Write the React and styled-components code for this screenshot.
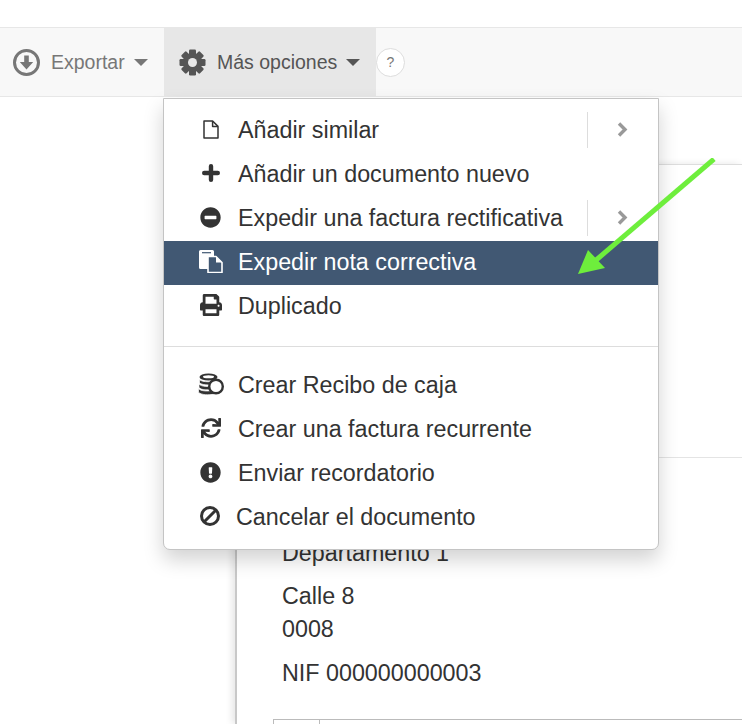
import React from "react";
import styled, { createGlobalStyle } from "styled-components";
import { FaMinusCircle, FaPrint, FaSync, FaExclamationCircle } from "react-icons/fa";

const GlobalStyle = createGlobalStyle`
  html, body { margin: 0; padding: 0; background: #fff; }
  body {
    width: 742px;
    height: 724px;
    overflow: hidden;
    font-family: "Liberation Sans", Arial, sans-serif;
    color: #333;
  }
`;

function FileOutline() {
  return (
    <svg viewBox="0 0 16 19" fill="none" stroke="#333" strokeWidth="1.5" strokeLinejoin="round">
      <path d="M1 1h8.6L15 6.4V18H1z" />
      <path d="M9.6 1v5.4H15" />
    </svg>
  );
}

function PlusIcon() {
  return (
    <svg viewBox="0 0 18 18" fill="none" stroke="#333" strokeWidth="4.4" strokeLinecap="round">
      <path d="M9 2.200V15.800M2.200 9H15.800" />
    </svg>
  );
}

function CopyDocs() {
  return (
    <svg viewBox="0 0 24 24">
      <path d="M1.5 1h12a1.5 1.5 0 0 1 1.5 1.5V20H1.5A1.5 1.5 0 0 1 0 18.500V2.500A1.500 1.500 0 0 1 1.500 1z" fill="#fff" />
      <path d="M3 3.700h9" stroke="#415873" strokeWidth="1.200" />
      <path d="M9 7.500h8l6 6V23.500H9z" fill="#415873" stroke="#fff" strokeWidth="1.600" strokeLinejoin="round" />
      <path d="M17 7.500v6h6z" fill="#fff" />
    </svg>
  );
}

function Coins() {
  return (
    <svg viewBox="0 0 26 22">
      <ellipse cx="10.500" cy="4" rx="9" ry="3.600" fill="#333" />
      <ellipse cx="10.500" cy="3.800" rx="5.500" ry="1.500" fill="#fff" />
      <path d="M1.500 6.500c2 3 15 3 18 0v3.500c-3 2.600-15 2.600-18 0z" fill="#333" stroke="#fff" strokeWidth="0.700" />
      <path d="M1 11c2 2.800 10 3 13 1.600v3.400c-3 1.400-11 1.200-13-1.400z" fill="#333" stroke="#fff" strokeWidth="0.700" />
      <path d="M0.500 15.500c2 2.800 10 3 13.500 1.800l2 3.700c-5 1.400-13 1-15.500-1.800z" fill="#333" stroke="#fff" strokeWidth="0.700" />
      <circle cx="18" cy="13.500" r="6.800" fill="#fff" stroke="#333" strokeWidth="2.400" />
    </svg>
  );
}

function BanIcon() {
  return (
    <svg viewBox="0 0 20 20" fill="none" stroke="#333" strokeWidth="3">
      <circle cx="10" cy="10" r="8.500" />
      <path d="M4 16L16 4" />
    </svg>
  );
}

function Chevron() {
  return (
    <svg width="11" height="15" viewBox="0 0 11 15" fill="none" stroke="#999" strokeWidth="3.400">
      <path d="M2 1.500L8 7.500L2 13.500" />
    </svg>
  );
}

function DownloadRing() {
  return (
    <svg viewBox="0 0 27 27" fill="currentColor">
      <circle cx="13.500" cy="13.500" r="12" fill="none" stroke="currentColor" strokeWidth="3" />
      <path d="M11.200 6.500h4.600v6.500h4.400l-6.700 7.400-6.700-7.400h4.400z" />
    </svg>
  );
}

function GearIcon() {
  const teeth = [0, 45, 90, 135];
  return (
    <svg viewBox="0 0 27 27" fill="currentColor">
      {teeth.map((a) => (
        <rect key={a} x="10" y="0.500" width="7" height="26" rx="1.200" transform={`rotate(${a} 13.500 13.500)`} />
      ))}
      <circle cx="13.500" cy="13.500" r="9.500" />
      <circle cx="13.500" cy="13.500" r="4.500" fill="#e7e7e7" />
    </svg>
  );
}

function Arrow() {
  return (
    <svg width="140" height="120" viewBox="0 0 140 120">
      <path d="M136 1 L17 103" stroke="#6eee3c" strokeWidth="5" fill="none" />
      <path d="M0 116 L10 92 L27 110 Z" fill="#6eee3c" />
    </svg>
  );
}

const menuTop = [
  { icon: <FileOutline />, w: 16, h: 19, label: "Añadir similar", more: true },
  { icon: <PlusIcon />, w: 18, h: 18, label: "Añadir un documento nuevo" },
  { icon: <FaMinusCircle />, w: 21, h: 21, label: "Expedir una factura rectificativa", more: true },
  { icon: <CopyDocs />, w: 24, h: 24, label: "Expedir nota correctiva", active: true },
  { icon: <FaPrint />, w: 22, h: 22, label: "Duplicado" },
];

const menuBottom = [
  { icon: <Coins />, w: 26, h: 22, label: "Crear Recibo de caja" },
  { icon: <FaSync />, w: 20, h: 20, label: "Crear una factura recurrente" },
  { icon: <FaExclamationCircle />, w: 21, h: 21, label: "Enviar recordatorio" },
  { icon: <BanIcon />, w: 20, h: 20, label: "Cancelar el documento", shift: true },
];

function Row({ item }) {
  return (
    <MenuRow $active={item.active}>
      <IconBox $w={item.w} $h={item.h} $shift={item.shift}>
        {item.icon}
      </IconBox>
      <RowLabel>{item.label}</RowLabel>
      {item.more && (
        <More>
          <Chevron />
        </More>
      )}
    </MenuRow>
  );
}

export default function App() {
  return (
    <Page>
      <GlobalStyle />
      <Toolbar>
        <ToolButton>
          <DownloadRing />
          <span>Exportar</span>
          <Caret />
        </ToolButton>
        <ToolButton $open>
          <GearIcon />
          <span>Más opciones</span>
          <Caret />
        </ToolButton>
        <Help>?</Help>
      </Toolbar>
      <Body>
        <Sheet>
          <SheetHead />
          <SheetText>
            <p>Departamento 1</p>
            <p>
              Calle 8
              <br />
              0008
            </p>
            <p>NIF 000000000003</p>
          </SheetText>
          <TableHead>
            <div />
            <div />
          </TableHead>
        </Sheet>
        <Menu>
          {menuTop.map((item) => (
            <Row key={item.label} item={item} />
          ))}
          <Divider />
          {menuBottom.map((item) => (
            <Row key={item.label} item={item} />
          ))}
        </Menu>
        <ArrowLayer>
          <Arrow />
        </ArrowLayer>
      </Body>
    </Page>
  );
}

const Page = styled.div`
  width: 742px;
  height: 724px;
  overflow: hidden;
  padding-top: 27px;
  box-sizing: border-box;
`;

const Toolbar = styled.div`
  display: flex;
  align-items: center;
  height: 68px;
  background: #f8f8f8;
  border-top: 1px solid #e7e7e7;
  border-bottom: 1px solid #e7e7e7;
`;

const ToolButton = styled.div`
  display: flex;
  align-items: center;
  box-sizing: border-box;
  height: 100%;
  width: ${(p) => (p.$open ? "212px" : "164px")};
  padding-left: ${(p) => (p.$open ? "15px" : "13px")};
  font-size: 19.5px;
  color: ${(p) => (p.$open ? "#555" : "#777")};
  background: ${(p) => (p.$open ? "#e7e7e7" : "transparent")};

  svg {
    width: 27px;
    height: 27px;
    flex: none;
    margin-right: 11px;
  }

  span {
    margin-right: 9px;
    padding-top: 1px;
  }
`;

const Caret = styled.i`
  width: 0;
  height: 0;
  border-left: 7px solid transparent;
  border-right: 7px solid transparent;
  border-top: 7px solid currentColor;
`;

const Help = styled.div`
  width: 29px;
  height: 29px;
  box-sizing: border-box;
  border: 1px solid #ddd;
  border-radius: 50%;
  background: #fff;
  color: #777;
  font-size: 14px;
  display: flex;
  align-items: center;
  justify-content: center;
`;

const Body = styled.div`
  position: relative;
  padding: 67px 0 0 235px;
`;

const Sheet = styled.div`
  width: 507px;
  height: 560px;
  border-left: 2px solid #c8c8c8;
  border-top: 1px solid #ddd;
  box-shadow: -3px 0 7px rgba(0, 0, 0, 0.1);
  box-sizing: border-box;
`;

const SheetHead = styled.div`
  height: 292px;
  border-bottom: 1px solid #e4e4e4;
`;

const SheetText = styled.div`
  padding: 79px 0 0 45px;
  font-size: 23.3px;
  line-height: 33px;

  p {
    margin: 0 0 11px;
  }

  p:first-child {
    margin-bottom: 10px;
  }
`;

const TableHead = styled.div`
  display: grid;
  grid-template-columns: 45px 1fr;
  margin: 29px 0 0 36px;
  border-top: 1px solid #bbb;
  border-left: 1px solid #bbb;
  height: 20px;

  div + div {
    border-left: 1px solid #bbb;
  }
`;

const Menu = styled.div`
  position: absolute;
  left: 163px;
  top: 1px;
  width: 496px;
  height: 452px;
  box-sizing: border-box;
  padding: 10px 0;
  background: #fff;
  border: 1px solid #c4c4c4;
  border-radius: 0 0 7px 7px;
  box-shadow: 0 10px 20px rgba(0, 0, 0, 0.175);
`;

const MenuRow = styled.div`
  display: flex;
  align-items: center;
  box-sizing: border-box;
  height: 44px;
  padding: 0 0 2px 35px;
  font-size: 23.3px;
  color: ${(p) => (p.$active ? "#fff" : "#333")};
  background: ${(p) => (p.$active ? "#415873" : "transparent")};
`;

const IconBox = styled.span`
  width: 23px;
  margin-left: ${(p) => (p.$shift ? "-1px" : "0")};
  margin-right: ${(p) => (p.$shift ? "15px" : "16px")};
  margin-bottom: 2px;
  display: flex;
  align-items: center;
  justify-content: center;
  flex: none;

  svg {
    width: ${(p) => p.$w}px;
    height: ${(p) => p.$h}px;
    flex: none;
  }
`;

const RowLabel = styled.span`
  flex: 1;
`;

const More = styled.span`
  width: 71px;
  height: 36px;
  box-sizing: border-box;
  border-left: 1px solid #ddd;
  padding: 0 2px 2px 0;
  display: flex;
  align-items: center;
  justify-content: center;
`;

const Divider = styled.div`
  height: 1px;
  margin: 17px 0 17px;
  background: #ddd;
`;

const ArrowLayer = styled.div`
  position: absolute;
  left: 578px;
  top: 61px;
`;
